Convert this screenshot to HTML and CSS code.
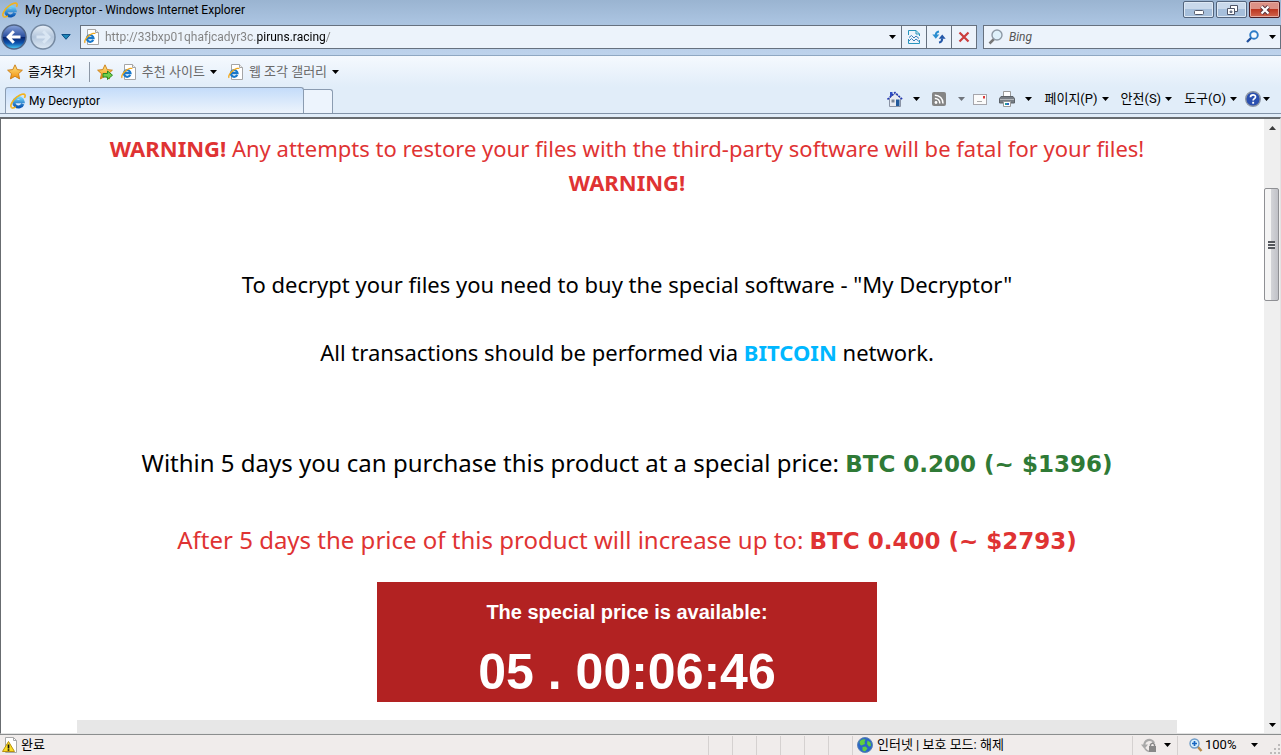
FILE: index.html
```
<!DOCTYPE html>
<html lang="ko">
<head>
  <meta charset="utf-8">
  <title>My Decryptor - Windows Internet Explorer</title>
  <link rel="stylesheet" href="styles.css">
</head>
<body>
  <!-- shared icons -->
  <svg class="defs" width="0" height="0" aria-hidden="true">
    <defs>
      <linearGradient id="ie-blue" x1="0" y1="0" x2="0" y2="1">
        <stop offset="0" stop-color="#6fd0f7"/>
        <stop offset="1" stop-color="#0b57b4"/>
      </linearGradient>
      <linearGradient id="gold" x1="0" y1="0" x2="0" y2="1">
        <stop offset="0" stop-color="#ffe98a"/>
        <stop offset="1" stop-color="#f08c06"/>
      </linearGradient>
      <linearGradient id="nav-blue" x1="0" y1="0" x2="0" y2="1">
        <stop offset="0" stop-color="#8ba6dd"/>
        <stop offset="0.48" stop-color="#2b4f9f"/>
        <stop offset="0.5" stop-color="#082068"/>
        <stop offset="0.75" stop-color="#0d53ad"/>
        <stop offset="1" stop-color="#4fd2f8"/>
      </linearGradient>
      <linearGradient id="nav-grey" x1="0" y1="0" x2="0" y2="1">
        <stop offset="0" stop-color="#eaf1f9"/>
        <stop offset="0.5" stop-color="#b3c6dc"/>
        <stop offset="1" stop-color="#dfeaf5"/>
      </linearGradient>
      <symbol id="ie" viewBox="0 0 16 16">
        <path d="M12.800 10.900A4.600 4.600 0 1 1 13 8.600H5" fill="none" stroke="url(#ie-blue)" stroke-width="3.200"/>
        <path d="M1.600 14.800C-.6 12.600 2.400 7.200 7 3.900 10.400 1.400 14.200.2 15 1.900c.4.800 0 1.900-.6 2.900" fill="none" stroke="#f2b21c" stroke-width="1.600"/>
        <path d="M1.600 14.800c1 .6 2.700 0 4.300-.9" fill="none" stroke="#f2b21c" stroke-width="1.400"/>
      </symbol>
      <symbol id="ie-page" viewBox="0 0 16 16">
        <path d="M3.500.5h8l3 3v12h-11z" fill="#fff" stroke="#a5a5a5"/>
        <path d="M11.500.5v3h3" fill="#eee" stroke="#a5a5a5"/>
        <path d="M9.200 10.900A3.300 3.300 0 1 1 9.500 9.200H3.500" fill="none" stroke="#1878cb" stroke-width="2.200"/>
        <path d="M1.100 13.900C-.2 12 2.500 8.200 5.500 6.100 8 4.400 10.800 3.800 11 5" fill="none" stroke="#f2a91c" stroke-width="1.300"/>
      </symbol>
      <symbol id="star" viewBox="0 0 16 16">
        <path d="M8 .8l2.200 4.800 5.200.6-3.900 3.500 1.100 5.200L8 12.300l-4.600 2.600 1.100-5.200L.6 6.200l5.200-.6z" fill="url(#gold)" stroke="#c97a12" stroke-width=".9"/>
      </symbol>
      <symbol id="caret" viewBox="0 0 7 4">
        <path d="M0 0h7L3.500 4z" fill="currentColor"/>
      </symbol>
    </defs>
  </svg>

  <div class="browser">
    <header class="titlebar">
      <svg class="icon"><use href="#ie"/></svg>
      <span class="window-title">My Decryptor - Windows Internet Explorer</span>
      <div class="window-buttons">
        <button type="button" aria-label="Minimize">
          <svg width="12" height="12"><rect x="1.500" y="6.500" width="9" height="4" rx="1" fill="#fff" stroke="#555b6b"/></svg>
        </button>
        <button type="button" aria-label="Restore">
          <svg width="12" height="12"><path d="M4.500 1.500h7v6h-7z" fill="#fff" stroke="#4f5668"/><path d="M1.500 4.500h7v6h-7z" fill="#fff" stroke="#4f5668"/><path d="M4 7h2v1.500H4z" fill="#9fb4cf" stroke="#4f5668" stroke-width=".8"/></svg>
        </button>
        <button type="button" class="close" aria-label="Close">
          <svg width="12" height="10"><path d="M2.500 1.500l7 7M9.500 1.500l-7 7" stroke="#5a3640" stroke-width="4.200"/><path d="M2.500 1.500l7 7M9.500 1.500l-7 7" stroke="#fff" stroke-width="2.200"/></svg>
        </button>
      </div>
    </header>

    <div class="navbar">
      <div class="nav-buttons">
        <button type="button" aria-label="Back">
          <svg width="26" height="26"><circle cx="13" cy="13" r="12" fill="url(#nav-blue)" stroke="#4f6486" stroke-width="1.500"/><path d="M19.500 13H8M12.800 7.300L7.200 13l5.600 5.700" fill="none" stroke="#fff" stroke-width="3"/></svg>
        </button>
        <button type="button" aria-label="Forward">
          <svg width="26" height="26"><circle cx="13" cy="13" r="12" fill="url(#nav-grey)" stroke="#7589a1" stroke-width="1.500"/><path d="M6.500 13H18M13.200 7.300l5.600 5.700-5.600 5.700" fill="none" stroke="#d9e6f3" stroke-width="3"/></svg>
        </button>
        <button type="button" aria-label="Recent pages">
          <svg width="10" height="6"><path d="M.8.5h8.400L5 5.300z" fill="#1e87b8" stroke="#0c4f86"/></svg>
        </button>
      </div>
      <div class="address-box">
        <svg class="icon"><use href="#ie-page"/></svg>
        <input class="url" type="text" aria-label="Address" value="http://33bxp01qhafjcadyr3c.piruns.racing/">
        <button type="button" class="drop" aria-label="Show address list"><svg class="caret"><use href="#caret"/></svg></button>
        <button type="button" class="tool" aria-label="Compatibility view">
          <svg width="12" height="14"><path d="M.5 5v-4.500h7.500l3.500 3.500v2M.5 9v4.500h11V10" fill="none" stroke="#2795bd"/><path d="M8 .5v3.500h3.500" fill="none" stroke="#2795bd"/><path d="M1 7.500l2.500-2 2.500 2.500 2-2 3 2.500M1 11l2.500-2.500L6 11l2-2 3 2.500" fill="none" stroke="#3a7fb9"/></svg>
        </button>
        <button type="button" class="tool" aria-label="Refresh">
          <svg width="14" height="14"><path d="M7 1.500Q3.800 2 3.800 5" fill="none" stroke="#2b8ed0" stroke-width="2"/><path d="M.3 4.500h7L3.800 8.800z" fill="#2b8ed0"/><path d="M7 12.500q3.200-.5 3.200-4" fill="none" stroke="#2458a8" stroke-width="2"/><path d="M6.700 8.800h7l-3.500-4.300z" fill="#2458a8"/></svg>
        </button>
        <button type="button" class="tool" aria-label="Stop">
          <svg width="12" height="12"><path d="M1.500 1.500l9 9M10.500 1.500l-9 9" stroke="#cb3d3d" stroke-width="2.200"/></svg>
        </button>
      </div>
      <div class="search-box">
        <svg width="16" height="16"><path d="M6 10L1.500 14.500" stroke="#777" stroke-width="2.500"/><circle cx="9" cy="6" r="5" fill="#dff1fb" stroke="#8d99a5" stroke-width="1.400"/></svg>
        <input type="text" aria-label="Search" placeholder="Bing">
        <button type="button" aria-label="Search">
          <svg width="13" height="13"><path d="M5.500 7.500L1 12" stroke="#1f4f9c" stroke-width="2.300"/><circle cx="8" cy="5" r="3.800" fill="#f5faff" stroke="#2d7cc7" stroke-width="1.900"/></svg>
        </button>
        <button type="button" aria-label="Search options"><svg class="caret"><use href="#caret"/></svg></button>
      </div>
    </div>

    <div class="favorites">
      <button type="button" class="fav-main"><svg class="icon"><use href="#star"/></svg>즐겨찾기</button>
      <button type="button" aria-label="Add to favorites">
        <svg width="16" height="16"><use href="#star"/><path d="M6 9.500h4.500V7l5 4.200-5 4.300V13H6z" fill="#6fd04a" stroke="#2d8a22"/></svg>
      </button>
      <button type="button" class="fav-link"><svg class="icon"><use href="#ie-page"/></svg>추천 사이트<svg class="caret"><use href="#caret"/></svg></button>
      <button type="button" class="fav-link"><svg class="icon"><use href="#ie-page"/></svg>웹 조각 갤러리<svg class="caret"><use href="#caret"/></svg></button>
    </div>

    <div class="tabbar">
      <button type="button" class="tab"><svg class="icon"><use href="#ie"/></svg>My Decryptor</button>
      <button type="button" class="new-tab" aria-label="New tab"></button>
      <div class="commands">
        <button type="button" aria-label="Home">
          <svg width="16" height="16"><path d="M3 1h2.500v5H3z" fill="#2e4ec4"/><path d="M2.500 7L8 2.500 13.500 7v8.500h-11z" fill="#e8ebf2" stroke="#8a93a5"/><path d="M.5 8.500L8 1.500l7.500 7" fill="none" stroke="#2438b5" stroke-width="1.600" stroke-dasharray="2 1"/><path d="M4.500 8.500h3v3h-3z" fill="#7c8798"/><path d="M9 8.500h3.500V15H9z" fill="#225a9c"/></svg>
          <svg class="caret"><use href="#caret"/></svg>
        </button>
        <button type="button" class="feeds" aria-label="Feeds">
          <svg width="14" height="14"><rect width="14" height="14" rx="2" fill="#858585"/><circle cx="4" cy="10.500" r="1.400" fill="#fff"/><path d="M2.800 6.400A4.700 4.700 0 0 1 7.800 11.500M2.800 3.200A8 8 0 0 1 11 11.500" fill="none" stroke="#fff" stroke-width="1.500"/></svg>
          <svg class="caret"><use href="#caret"/></svg>
        </button>
        <button type="button" class="mail" aria-label="Read mail">
          <svg width="14" height="11"><rect x=".5" y=".5" width="13" height="10" fill="#fbfbfb" stroke="#a6a6ac"/><path d="M10 2h2v2.500h-2z" fill="#dc3b3b"/><path d="M4 7.500h5" stroke="#aaa"/></svg>
        </button>
        <button type="button" aria-label="Print">
          <svg width="16" height="16"><path d="M4.500.5h7v6h-7z" fill="#fff" stroke="#9b9b9b"/><path d="M2 5.500h12l1.500 2v4.500H.5V7.500z" fill="#777d84" stroke="#5c6268"/><path d="M1 8.500h14" stroke="#b4b8bc"/><path d="M4.500 10.500h7v5h-7z" fill="#fff" stroke="#999"/><path d="M6 12h2v2H6z" fill="#2a9a9a"/><path d="M8 12h2v2H8z" fill="#2d65c8"/></svg>
          <svg class="caret"><use href="#caret"/></svg>
        </button>
        <button type="button" class="menu">페이지(P)<svg class="caret"><use href="#caret"/></svg></button>
        <button type="button" class="menu">안전(S)<svg class="caret"><use href="#caret"/></svg></button>
        <button type="button" class="menu">도구(O)<svg class="caret"><use href="#caret"/></svg></button>
        <button type="button" class="help" aria-label="Help">
          <svg width="16" height="16"><circle cx="8" cy="8" r="7.300" fill="#2a4fb0" stroke="#8d96a5" stroke-width="1.400"/><path d="M5.500 6.300C5.500 3 10.700 3.300 10.500 6c-.1 1.600-2.400 1.700-2.400 3.500" fill="none" stroke="#fff" stroke-width="1.700"/><rect x="7.200" y="10.800" width="1.900" height="1.900" fill="#fff"/></svg>
          <svg class="caret"><use href="#caret"/></svg>
        </button>
      </div>
    </div>

    <div class="viewport">
      <main class="page">
        <p class="warning"><strong>WARNING!</strong> Any attempts to restore your files with the third-party software will be fatal for your files! <strong>WARNING!</strong></p>
        <p class="software">To decrypt your files you need to buy the special software - "My Decryptor"</p>
        <p class="network">All transactions should be performed via <strong class="bitcoin">BITCOIN</strong> network.</p>
        <p class="price">Within 5 days you can purchase this product at a special price: <strong>BTC 0.200 (~ $1396)</strong></p>
        <p class="price late">After 5 days the price of this product will increase up to: <strong>BTC 0.400 (~ $2793)</strong></p>
        <section class="timer">
          <h2>The special price is available:</h2>
          <div class="countdown">05 . 00:06:46</div>
        </section>
        <section class="panel"></section>
      </main>
      <div class="scrollbar">
        <button type="button" aria-label="Scroll up"><svg width="7" height="4"><path d="M0 4h7L3.500 0z" fill="#3c3c3c"/></svg></button>
        <div class="track"><div class="thumb"></div></div>
        <button type="button" aria-label="Scroll down"><svg class="caret"><use href="#caret"/></svg></button>
      </div>
    </div>

    <footer class="statusbar">
      <div class="status-text">
        <svg width="16" height="16"><path d="M3.500.5h8l3 3v12h-11z" fill="#fff" stroke="#a8a8a8"/><path d="M11.500.5v3h3" fill="none" stroke="#a8a8a8"/><path d="M6.500 4.500l6 10H.5z" fill="#fbdc24" stroke="#b99210" stroke-linejoin="round"/><path d="M6.500 7.500v4M6.500 12.300v1.400" stroke="#111" stroke-width="1.700"/></svg>
        완료
      </div>
      <div class="cell"></div>
      <div class="cell"></div>
      <div class="cell"></div>
      <div class="cell"></div>
      <div class="cell"></div>
      <div class="cell"></div>
      <div class="zone">
        <svg width="16" height="16"><circle cx="8" cy="8" r="7.500" fill="#2a66c8" stroke="#5b83b4"/><path d="M2.500 4.500Q5 1.500 8.500 2.500L7.500 5 8 7 4.500 8.500 3 7.500zM10.500 3.500l3 2 .5 3.500-2 .5-2-2.500zM5.500 10l3-.5 2 2L8 14.500l-2.500-1z" fill="#5fcf3c"/></svg>
        인터넷 | 보호 모드: 해제
      </div>
      <div class="privacy">
        <svg width="16" height="16"><path d="M3.500 9A5 5 0 0 1 13 6" fill="none" stroke="#a9a9a9" stroke-width="2.200"/><path d="M0 7.500h7L3.500 12z" fill="#a9a9a9"/><path d="M4 11.500q1.500 2.500 4 3" fill="none" stroke="#a9a9a9" stroke-width="1.500"/><rect x="8" y="9" width="7" height="6" fill="#888"/><path d="M9.500 9V7.500Q11.500 5 13.500 7.500V9" fill="none" stroke="#888" stroke-width="1.400"/></svg>
        <svg class="caret"><use href="#caret"/></svg>
      </div>
      <button type="button" class="zoom">
        <svg width="14" height="14"><path d="M8.500 8.500L12.500 13" stroke="#b88a4a" stroke-width="2.500"/><circle cx="5.500" cy="5.500" r="4.500" fill="#d9f0fc" stroke="#6e9cc8" stroke-width="1.400"/><path d="M5.500 3v5M3 5.500h5" stroke="#1665c0" stroke-width="1.700"/></svg>
        <span>100%</span>
        <svg class="caret"><use href="#caret"/></svg>
      </button>
      <svg class="grip" width="12" height="12"><path d="M9 1h2v2H9zM5 5h2v2H5zM9 5h2v2H9zM1 9h2v2H1zM5 9h2v2H5zM9 9h2v2H9z" fill="#bdbaba"/></svg>
    </footer>
  </div>
</body>
</html>
```
FILE: styles.css
```
* {
  box-sizing: border-box;
}

body {
  margin: 0;
  font-family: Roboto, "Noto Sans CJK KR", sans-serif;
  font-size: 12px;
  line-height: 16px;
  color: #000;
}

button,
input {
  font: inherit;
  color: inherit;
  margin: 0;
  padding: 0;
  border: 0;
  background: none;
}

button {
  display: flex;
  align-items: center;
  cursor: pointer;
}

svg {
  display: block;
  flex: none;
}

.defs {
  position: absolute;
}

.icon {
  width: 16px;
  height: 16px;
}

.caret {
  width: 7px;
  height: 4px;
}

.browser {
  display: flex;
  flex-direction: column;
  height: 100vh;
  overflow: hidden;
  background: #e1edf9;
}

/* title bar */
.titlebar {
  display: flex;
  align-items: center;
  height: 20px;
  padding-left: 2px;
  background: linear-gradient(#9ab4d1, #a9c2df);
}

.window-title {
  flex: 1;
  margin-left: 7px;
}

.window-buttons {
  display: flex;
  align-self: flex-start;
  gap: 2px;
  padding: 1px 1px 0 0;
}

.window-buttons button {
  justify-content: center;
  width: 31px;
  height: 17px;
  border: 1px solid #53657d;
  border-radius: 2px;
  background: linear-gradient(#c9d9eb 50%, #a6bfdb 50%);
  box-shadow: inset 0 0 0 1px #dde8f4;
}

.window-buttons .close {
  border-color: #4b1d24;
  background: linear-gradient(#dc9186 50%, #bc3620 50%, #d1664f);
  box-shadow: inset 0 0 0 1px #e6aca2;
}

/* address bar */
.navbar {
  display: flex;
  align-items: center;
  height: 36px;
  padding-bottom: 2px;
  background: linear-gradient(#a9c2df, #bed3ec);
  border-bottom: 1px solid #8fa7c2;
}

.nav-buttons {
  display: flex;
  align-items: center;
  width: 80px;
  padding-left: 1px;
  gap: 3px;
}

.nav-buttons button:last-child {
  margin-left: 2px;
}

.address-box,
.search-box {
  display: flex;
  align-items: center;
  height: 24px;
  border: 1px solid #66717f;
  background: #ecf3fb;
}

.address-box {
  flex: 1;
  padding-left: 3px;
  margin-right: 6px;
}

/* host part of the address is darker than the rest */
.url {
  flex: 1;
  min-width: 0;
  height: 22px;
  margin-left: 5px;
  background: linear-gradient(90deg, #808080 152px, #000 152px, #000 220px, #808080 220px);
  background-clip: text;
  -webkit-background-clip: text;
  color: transparent;
}

.drop {
  width: 12px;
  height: 22px;
}

.tool {
  justify-content: center;
  width: 25px;
  height: 22px;
  border-left: 1px solid #66717f;
}

.search-box {
  width: 298px;
  padding: 0 4px;
}

.search-box input {
  flex: 1;
  min-width: 0;
  margin-left: 5px;
  font-style: italic;
}

.search-box input::placeholder {
  color: #555;
  opacity: 1;
}

.search-box button {
  margin-left: 10px;
}

/* favorites bar */
.favorites {
  display: flex;
  align-items: center;
  height: 31px;
  padding-left: 7px;
  background: linear-gradient(#f5f9fe, #e1edf9);
  font-size: 13px;
}

.favorites button {
  gap: 5px;
}

.favorites .fav-main {
  height: 20px;
  padding-right: 13px;
  margin-right: 7px;
  border-right: 1px solid #8d98a6;
}

.favorites .fav-link {
  margin-left: 8px;
  color: #6a6a6a;
}

.favorites .fav-link + .fav-link {
  margin-left: 11px;
}

.fav-link .caret {
  color: #000;
}

/* tabs and command bar */
.tabbar {
  display: flex;
  align-items: flex-end;
  height: 27px;
  padding-left: 5px;
  border-bottom: 1px solid #8293a8;
}

.tab {
  width: 299px;
  height: 26px;
  padding-left: 4px;
  gap: 3px;
  border: 1px solid #8b9cb1;
  border-bottom: 0;
  border-radius: 3px 3px 0 0;
  background: linear-gradient(#c4dcfa, #edf4fc);
}

.new-tab {
  width: 29px;
  height: 24px;
  border: 1px solid #8b9cb1;
  border-left: 0;
  border-bottom: 0;
  border-radius: 0 3px 0 0;
  background: #edf4fd;
}

.commands {
  display: flex;
  align-items: center;
  height: 28px;
  margin-left: auto;
  padding-right: 11px;
  gap: 12px;
}

.commands button {
  gap: 10px;
}

.commands .feeds {
  gap: 12px;
}

.feeds .caret {
  color: #70757c;
}

.commands .mail {
  margin-left: -4px;
}

.commands .menu {
  gap: 4px;
  font-size: 13px;
}

.commands .help {
  gap: 2px;
  margin-left: -4px;
}

/* page */
.viewport {
  display: flex;
  flex: 1;
  min-height: 0;
  margin-top: 3px;
  border-top: 2px solid #686c70;
  border-left: 1px solid #686c70;
  border-right: 1px solid #e3e3e3;
  border-bottom: 1px solid #e3e3e3;
  background: #fff;
}

.page {
  flex: 1;
  min-width: 0;
  padding: 12px 87px 0 76px;
  overflow: hidden;
  text-align: center;
  font-family: "Noto Sans", Verdana, sans-serif;
  font-size: 22px;
  line-height: 34px;
}

.page p {
  margin: 0;
}

.page .software {
  margin-top: 68px;
}

.page .network {
  margin-top: 34px;
}

.bitcoin {
  color: #00b7ff;
}

.page .price {
  margin-top: 76px;
  font-size: 24px;
  line-height: 36px;
}

.price strong {
  color: #2f7a36;
  font-family: "DejaVu Sans", Verdana, sans-serif;
  font-size: 23px;
}

.page .late {
  margin-top: 40px;
}

.warning,
.late,
.late strong {
  color: #df3333;
}

.timer {
  width: 500px;
  max-width: 100%;
  height: 120px;
  margin: 23px auto 18px;
  padding-top: 18px;
  background: #b22222;
  color: #fff;
  font-family: "Liberation Sans", Arial, sans-serif;
  font-weight: bold;
}

.timer h2 {
  margin: 0;
  font-size: 20px;
  line-height: 24px;
}

.countdown {
  margin-top: 18px;
  font-size: 50px;
  line-height: 60px;
}

.panel {
  height: 300px;
  background: #e7e7e7;
}

/* scrollbar */
.scrollbar {
  display: flex;
  flex-direction: column;
  width: 16px;
  background: #efefef;
}

.scrollbar button {
  justify-content: center;
  height: 17px;
}

.track {
  flex: 1;
  padding-top: 52px;
}

.thumb {
  display: flex;
  align-items: center;
  justify-content: center;
  width: 15px;
  height: 113px;
  border: 1px solid #8f9094;
  border-radius: 2px;
  background: linear-gradient(90deg, #f4f4f4 45%, #d2d3d7 50%, #c0c1c7);
}

.thumb::before {
  content: "";
  width: 7px;
  height: 8px;
  background: repeating-linear-gradient(#55585e 0 2px, #eee 2px 3px);
}

/* status bar */
.statusbar {
  display: flex;
  align-items: center;
  height: 21px;
  border-top: 1px solid #8b8e8e;
  background: #f0eceb;
  font-size: 13px;
}

.status-text {
  display: flex;
  align-items: center;
  flex: 1;
  gap: 3px;
  padding-left: 2px;
}

.cell,
.zone,
.privacy,
.zoom {
  display: flex;
  align-items: center;
  height: 19px;
  border-left: 1px solid #d5d1d0;
}

.cell {
  width: 24px;
}

.zone {
  width: 280px;
  gap: 4px;
  padding-left: 4px;
}

.privacy {
  width: 45px;
  gap: 7px;
  padding-left: 8px;
}

.zoom {
  width: 92px;
  padding-left: 11px;
  gap: 2px;
}

.zoom .caret {
  margin-left: 13px;
}

.grip {
  align-self: flex-end;
}
```
